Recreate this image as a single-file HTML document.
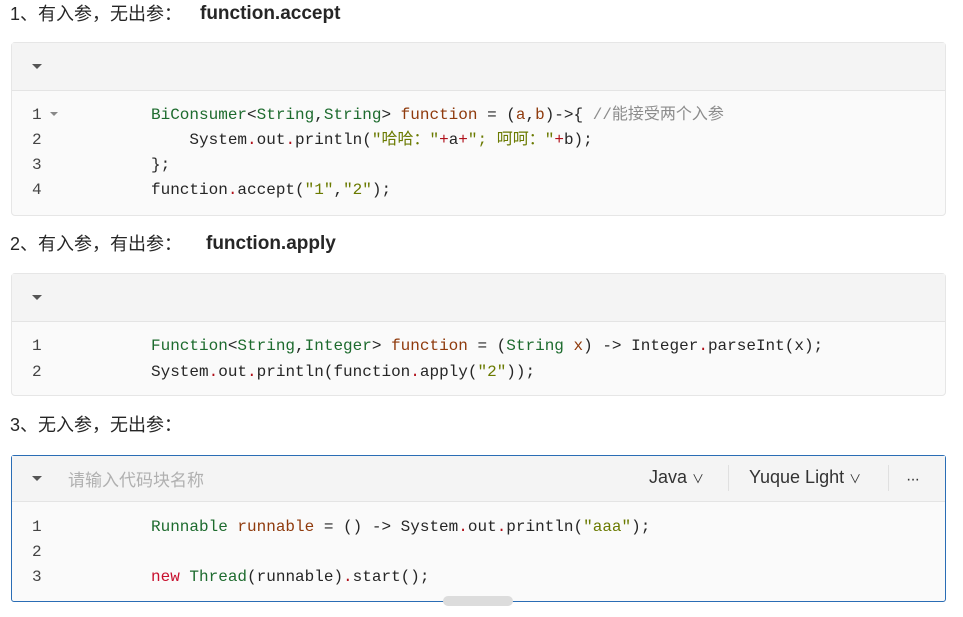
<!DOCTYPE html>
<html><head><meta charset="utf-8"><style>
body{margin:0;width:963px;height:617px;background:#fff;position:relative;overflow:hidden;font-family:"Liberation Sans","Noto Sans CJK SC",sans-serif;color:#262626}
.h{position:absolute;left:10px;font-size:18px;line-height:24px}
.h b{position:absolute;white-space:nowrap;font-size:19px}
.blk{position:absolute;left:11px;width:935px;border:1px solid #e6e6e6;border-radius:4px;background:#fafafa;box-sizing:border-box}
.hd{height:47px;background:#f4f4f4;border-bottom:1px solid #e4e4e4;position:relative}
.tri{position:absolute;left:20px;top:21px;width:0;height:0;border-left:5px solid transparent;border-right:5px solid transparent;border-top:5px solid #555}
.ln{position:absolute;font-family:"Liberation Mono","Noto Sans CJK SC",monospace;font-size:16px;line-height:24px;white-space:pre;color:#262626}
.n{left:20px;color:#444}
.c{left:139px}
.t{color:#1d6b2e}.v{color:#8f3a0c}.d{color:#b0101a}.s{color:#6a7a00}.m{color:#8c8c8c}.k{color:#c8102e}
.tl{position:absolute;left:38px;top:12px;border-left:4px solid transparent;border-right:4px solid transparent;border-top:4px solid #888}
</style></head><body>
<div class="h" style="top:2px">1、有入参，无出参：<b style="left:190px;top:0">function.accept</b></div>
<div class="blk" style="top:42px;height:174px">
 <div class="hd"><div class="tri"></div></div>
 <div class="ln n" style="top:60px">1</div><div class="tl" style="top:69px"></div>
 <div class="ln n" style="top:85px">2</div>
 <div class="ln n" style="top:110px">3</div>
 <div class="ln n" style="top:135px">4</div>
 <div class="ln c" style="top:60px"><span class="t">BiConsumer</span>&lt;<span class="t">String</span>,<span class="t">String</span>&gt; <span class="v">function</span> = (<span class="v">a</span>,<span class="v">b</span>)-&gt;{ <span class="m">//能接受两个入参</span></div>
 <div class="ln c" style="top:85px">    System<span class="d">.</span>out<span class="d">.</span>println(<span class="s">"哈哈："</span><span class="d">+</span>a<span class="d">+</span><span class="s">"; 呵呵："</span><span class="d">+</span>b);</div>
 <div class="ln c" style="top:110px">};</div>
 <div class="ln c" style="top:135px">function<span class="d">.</span>accept(<span class="s">"1"</span>,<span class="s">"2"</span>);</div>
</div>
<div class="h" style="top:232px">2、有入参，有出参：<b style="left:196px;top:0">function.apply</b></div>
<div class="blk" style="top:273px;height:123px">
 <div class="hd"><div class="tri"></div></div>
 <div class="ln n" style="top:60px">1</div>
 <div class="ln n" style="top:86px">2</div>
 <div class="ln c" style="top:60px"><span class="t">Function</span>&lt;<span class="t">String</span>,<span class="t">Integer</span>&gt; <span class="v">function</span> = (<span class="t">String</span> <span class="v">x</span>) -&gt; Integer<span class="d">.</span>parseInt(x);</div>
 <div class="ln c" style="top:86px">System<span class="d">.</span>out<span class="d">.</span>println(function<span class="d">.</span>apply(<span class="s">"2"</span>));</div>
</div>
<div class="h" style="top:413px">3、无入参，无出参：</div>
<div class="blk" style="top:455px;height:147px;border-color:#2a6db5;border-radius:3px">
 <div class="hd" style="height:45px"><div class="tri" style="top:20px"></div>
  <div style="position:absolute;left:56px;top:10px;font-size:17px;color:#b0b0b0">请输入代码块名称</div>
  <div style="position:absolute;left:637px;top:11px;font-size:18px;color:#333">Java <span style="font-size:12px">∨</span></div>
  <div style="position:absolute;left:716px;top:9px;width:1px;height:26px;background:#e0e0e0"></div>
  <div style="position:absolute;left:737px;top:11px;font-size:18px;color:#333">Yuque Light <span style="font-size:12px">∨</span></div>
  <div style="position:absolute;left:876px;top:9px;width:1px;height:26px;background:#e0e0e0"></div>
  <div style="position:absolute;left:894px;top:15px;font-size:16px;color:#333;letter-spacing:-1px">···</div>
 </div>
 <div class="ln n" style="top:59px">1</div>
 <div class="ln n" style="top:84px">2</div>
 <div class="ln n" style="top:109px">3</div>
 <div class="ln c" style="top:59px"><span class="t">Runnable</span> <span class="v">runnable</span> = () -&gt; System<span class="d">.</span>out<span class="d">.</span>println(<span class="s">"aaa"</span>);</div>
 <div class="ln c" style="top:109px"><span class="k">new</span> <span class="t">Thread</span>(runnable)<span class="d">.</span>start();</div>
 <div style="position:absolute;left:431px;top:140px;width:70px;height:10px;border-radius:5px;background:#dcdcdc"></div>
</div>
</body></html>
